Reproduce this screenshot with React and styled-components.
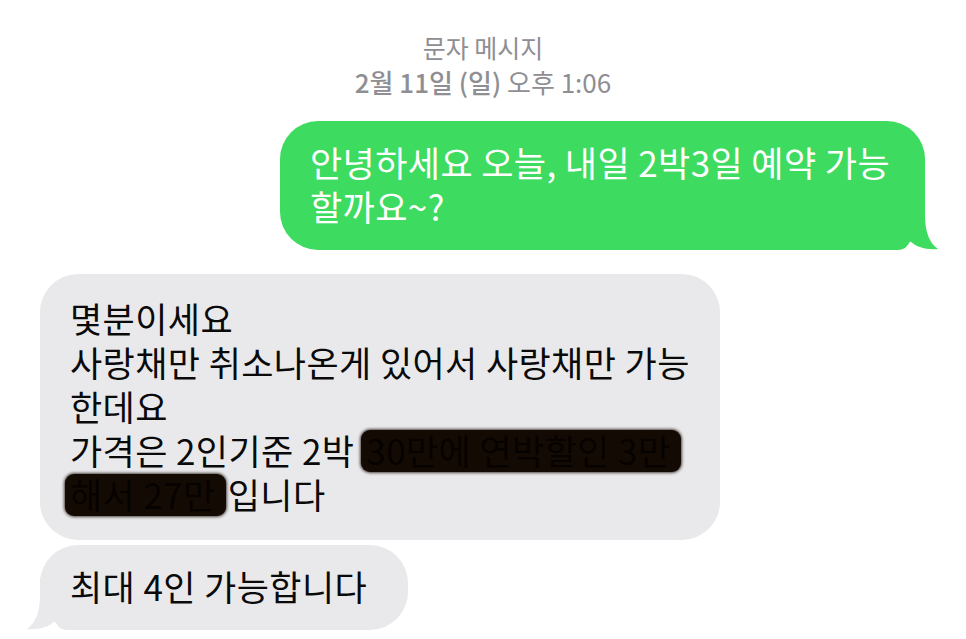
import React from 'react';
import styled, {createGlobalStyle} from 'styled-components';

const GlobalStyle = createGlobalStyle`
  html, body {
    margin: 0;
    padding: 0;
    background: #ffffff;
  }
  body {
    font-family: "Noto Sans CJK KR", "Noto Sans", "Liberation Sans", sans-serif;
  }
`;

const Thread = styled.div`
  width: 966px;
  height: 639px;
  box-sizing: border-box;
  padding: 30px 0 0 0;
  display: flex;
  flex-direction: column;
  overflow: hidden;
`;

const Header = styled.div`
  display: flex;
  flex-direction: column;
  align-items: center;
  color: #8e8e93;
  margin-bottom: 21px;
`;

const Service = styled.div`
  font-size: 25px;
  line-height: 34px;
`;

const Stamp = styled.div`
  font-size: 26px;
  line-height: 36px;
  b {
    font-weight: 500;
  }
`;

const Row = styled.div`
  display: flex;
  justify-content: ${props => props.mine ? 'flex-end' : 'flex-start'};
  padding: ${props => props.mine ? '0 41px 0 0' : '0 0 0 40px'};
  margin-top: ${props => props.gap || 0}px;
`;

const Bubble = styled.div`
  position: relative;
  box-sizing: border-box;
  width: ${props => props.width}px;
  padding: ${props => props.pad};
  border-radius: 38px;
  background: ${props => props.mine ? '#3ddb60' : '#e9e9eb'};
  color: ${props => props.mine ? '#ffffff' : '#0a0a0a'};
  font-size: 35px;
  line-height: 44px;
  letter-spacing: 0.4px;
  white-space: nowrap;
`;

const Text = styled.span`
  position: relative;
`;

const Tail = styled.svg`
  position: absolute;
  bottom: 0;
  width: 60px;
  height: 52px;
  ${props => props.left
    ? 'left: -15px; transform: scaleX(-1);'
    : 'right: -15px;'}
`;

const Redacted = styled.span`
  display: inline-block;
  line-height: 36px;
  padding: 2px 10px 4px 5px;
  margin-left: ${props => props.first ? '-5px' : '7px'};
  margin-right: 2px;
  background: #140a04;
  color: #060200;
  border-radius: 9px;
  box-shadow: 0 0 3px 1px rgba(20, 10, 4, 0.75);
`;

function BubbleTail({left, color}) {
    return (
        <Tail left={left} viewBox="0 0 60 52">
            <path
                d="M0,52 L18,52 C24,52 28,48 30,43 C36,49 46,52 58,51 C50,46 45,34 45,18 L45,0 L0,0 Z"
                fill={color}
            />
        </Tail>
    );
}

export default function App() {
    return (
        <Thread>
            <GlobalStyle/>
            <Header>
                <Service>문자 메시지</Service>
                <Stamp><b>2월 11일 (일)</b> 오후 1:06</Stamp>
            </Header>

            <Row mine>
                <Bubble mine width={645} pad="19px 20px 22px 30px">
                    <BubbleTail color="#3ddb60"/>
                    <Text>
                        안녕하세요 오늘, 내일 2박3일 예약 가능<br/>
                        할까요~?
                    </Text>
                </Bubble>
            </Row>

            <Row gap={24}>
                <Bubble width={680} pad="22px 20px 24px 30px">
                    <Text>
                        몇분이세요<br/>
                        사랑채만 취소나온게 있어서 사랑채만 가능<br/>
                        한데요<br/>
                        가격은 2인기준 2박<Redacted>30만에 연박할인 3만</Redacted><br/>
                        <Redacted first>해서 27만</Redacted>입니다
                    </Text>
                </Bubble>
            </Row>

            <Row gap={5}>
                <Bubble width={368} pad="19px 20px 22px 30px">
                    <BubbleTail left color="#e9e9eb"/>
                    <Text>최대 4인 가능합니다</Text>
                </Bubble>
            </Row>
        </Thread>
    );
}
